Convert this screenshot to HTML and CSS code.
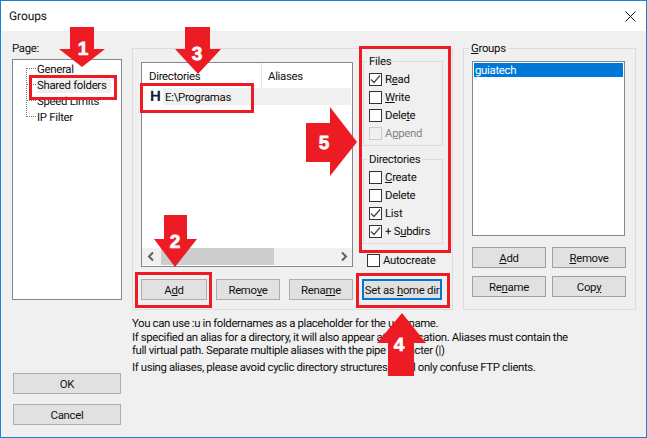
FILE: index.html
```html
<!DOCTYPE html>
<html lang="en">
<head>
<meta charset="utf-8">
<title>Groups</title>
<link rel="stylesheet" href="styles.css">
</head>
<body>
<div class="window">
  <header class="titlebar">
    <span class="title">Groups</span>
    <svg class="close" width="11" height="11" viewBox="0 0 11 11"><path d="M0.5 0.5L10.5 10.5M10.5 0.5L0.5 10.5" stroke="#111" fill="none"/></svg>
  </header>
  <main class="content">
    <aside class="pages">
      <label class="page-label">Page:</label>
      <div class="tree">
        <div class="tree-lines"></div>
        <div class="tree-item">General</div>
        <div class="tree-item selected">Shared folders</div>
        <div class="tree-item">Speed Limits</div>
        <div class="tree-item">IP Filter</div>
      </div>
      <div class="actions">
        <button class="btn wide">OK</button>
        <button class="btn wide">Cancel</button>
      </div>
    </aside>
    <section class="center">
      <div class="panel">
        <div class="panel-top">
          <div class="dirs">
            <div class="list-head"><span class="col-dir">Directories</span><span class="col-alias">Aliases</span></div>
            <div class="dir-row"><b class="home">H</b><span class="dir-name">E:\Programas</span></div>
            <div class="hscroll">
              <svg width="19" height="17" viewBox="0 0 19 17"><path d="M11 4.5L7 8.5L11 12.5" stroke="#606060" stroke-width="2" fill="none"/></svg>
              <div class="track"><div class="thumb"></div></div>
              <svg width="17" height="17" viewBox="0 0 17 17"><path d="M7 4.5L11 8.5L7 12.5" stroke="#606060" stroke-width="2" fill="none"/></svg>
            </div>
          </div>
          <div class="perms">
            <fieldset class="gbox files">
              <legend>Files</legend>
              <label class="check"><i class="box"><svg width="11" height="11" viewBox="0 0 11 11"><path d="M1 5.5L4 8.5L10 1.5" stroke="#444" fill="none" stroke-width="1.2"/></svg></i><span>R<u>e</u>ad</span></label>
              <label class="check"><i class="box"></i><span><u>W</u>rite</span></label>
              <label class="check"><i class="box"></i><span>Dele<u>t</u>e</span></label>
              <label class="check dis"><i class="box"></i><span>A<u>p</u>pend</span></label>
            </fieldset>
            <fieldset class="gbox dirsbox">
              <legend>Directories</legend>
              <label class="check"><i class="box"></i><span><u>C</u>reate</span></label>
              <label class="check"><i class="box"></i><span>Delete</span></label>
              <label class="check"><i class="box"><svg width="11" height="11" viewBox="0 0 11 11"><path d="M1 5.5L4 8.5L10 1.5" stroke="#444" fill="none" stroke-width="1.2"/></svg></i><span>List</span></label>
              <label class="check"><i class="box"><svg width="11" height="11" viewBox="0 0 11 11"><path d="M1 5.5L4 8.5L10 1.5" stroke="#444" fill="none" stroke-width="1.2"/></svg></i><span>+ S<u>u</u>bdirs</span></label>
            </fieldset>
            <label class="check auto"><i class="box"></i><span>Autocreate</span></label>
          </div>
        </div>
        <div class="btn-row">
          <button class="btn b-add">A<u>d</u>d</button>
          <button class="btn b-rem">Remo<u>v</u>e</button>
          <button class="btn b-ren">Rena<u>m</u>e</button>
          <button class="btn b-home">Set as <u>h</u>ome dir</button>
        </div>
      </div>
      <div class="notes">
        <p>You can use :u in foldernames as a placeholder for the username.</p>
        <p>If specified an alias for a directory, it will also appear at that location. Aliases must contain the<br>full virtual path. Separate multiple aliases with the pipe character (|)</p>
        <p>If using aliases, please avoid cyclic directory structures, it will only confuse FTP clients.</p>
      </div>
    </section>
    <fieldset class="gbox groups">
      <legend><u>G</u>roups</legend>
      <div class="group-list"><div class="group-sel">guiatech</div></div>
      <div class="group-btns">
        <button class="btn raised"><u>A</u>dd</button>
        <button class="btn raised"><u>R</u>emove</button>
        <button class="btn raised">Re<u>n</u>ame</button>
        <button class="btn raised">Cop<u>y</u></button>
      </div>
    </fieldset>
  </main>
  <svg class="marks" width="647" height="438" viewBox="0 0 647 438">
    <g class="rects">
      <rect x="30.5" y="76.5" width="85" height="22"/>
      <rect x="141.5" y="84.5" width="111" height="27"/>
      <rect x="360.5" y="47.5" width="89" height="204"/>
      <rect x="136.5" y="273.5" width="74" height="33"/>
      <rect x="357.5" y="274.5" width="91" height="32"/>
    </g>
    <g class="arrows">
      <path d="M70 27H94V49H105L82 67L59 49H70Z"/>
      <path d="M185 27H210V49H221L198 74L175 49H185Z"/>
      <path d="M306 123H330V107L357 142L330 176V162H306Z"/>
      <path d="M164 215H187V239H197L175 267L154 239H164Z"/>
      <path d="M388 376H414V343H426L402 313L377 343H388Z"/>
    </g>
    <g class="nums">
      <text x="83" y="55">1</text>
      <text x="197" y="60">3</text>
      <text x="324" y="149">5</text>
      <text x="175" y="248">2</text>
      <text x="399" y="351">4</text>
    </g>
  </svg>
</div>
</body>
</html>
```
FILE: styles.css
```css
* { box-sizing: border-box; }
html, body { margin: 0; padding: 0; }
body { width: 647px; height: 438px; overflow: hidden; font: 11.4px/16px Roboto, "Liberation Sans", sans-serif; letter-spacing: -.3px; text-rendering: geometricPrecision; color: #111; }
u { text-decoration: underline; text-underline-offset: 1px; }
.window { position: relative; width: 647px; height: 438px; border: 1px solid #1a82d4; background: #f0f0f0; display: flex; flex-direction: column; }
.titlebar { height: 30px; flex: none; background: #fff; display: flex; align-items: center; justify-content: space-between; padding: 0 10px 0 8px; }
.title { font-size: 12px; letter-spacing: -.1px; }
.content { flex: 1; display: flex; padding: 0 0 0 11px; }
.pages { width: 110px; flex: none; display: flex; flex-direction: column; }
.page-label { margin-top: 9px; height: 19px; line-height: 17px; }
.tree { position: relative; width: 110px; height: 241px; background: #fff; border: 1px solid #82878c; padding: 1px 0 0 24px; }
.tree-item { height: 16px; line-height: 16px; white-space: nowrap; position: relative; }
.tree-item.selected { background: #f0f0f0; margin-right: 10px; }
.tree-lines { position: absolute; left: 13px; top: 8px; width: 10px; height: 49px; border-left: 1px dotted #777; }
.tree-lines::before { content: ""; position: absolute; left: 0; top: 0; width: 10px; height: 49px; background: repeating-linear-gradient(to bottom, #777 0 1px, transparent 1px 16px); -webkit-mask: repeating-linear-gradient(to right, #000 0 1px, transparent 1px 2px); mask: repeating-linear-gradient(to right, #000 0 1px, transparent 1px 2px); }
.actions { margin-top: 73px; display: flex; flex-direction: column; gap: 10px; padding-left: 1px; }
.btn { font: inherit; letter-spacing: inherit; color: #111; background: #e1e1e1; border: 1px solid #adadad; height: 21px; padding: 0; white-space: nowrap; }
.btn.wide { width: 108px; }
.center { margin-left: 10px; width: 321px; flex: none; display: flex; flex-direction: column; }
.panel { margin-top: 17px; height: 262px; border: 1px solid #dcdcdc; padding: 13px 0 0 8px; }
.panel-top { display: flex; height: 217px; }
.dirs { width: 212px; height: 205px; flex: none; background: #fff; border: 1px solid #82878c; display: flex; flex-direction: column; }
.list-head { height: 25px; display: flex; align-items: center; flex: none; }
.col-dir { width: 120px; padding-left: 7px; height: 100%; line-height: 26px; border-right: 1px solid #e5e5e5; }
.col-alias { padding-left: 6px; line-height: 26px; height: 100%; }
.dir-row { height: 17px; margin-right: 1px; background: linear-gradient(to right, #fff 21px, #f0f0f0 21px); display: flex; align-items: center; padding-left: 8px; flex: none; }
.home { font: bold 15px/17px "Liberation Sans", sans-serif; letter-spacing: 0; color: #0f2238; width: 15px; }
.hscroll { margin-top: auto; height: 17px; display: flex; margin-bottom: 1px; background: #f0f0f0; align-items: center; flex: none; }
.track { flex: 1; height: 17px; }
.thumb { width: 113px; height: 17px; background: #cdcdcd; }
.perms { margin-left: 10px; margin-top: -8px; width: 80px; flex: none; position: relative; }
.gbox { margin: 0; border: 1px solid #dcdcdc; padding: 0; min-width: 0; }
.gbox legend { padding: 0 2px; line-height: 15px; }
.files { height: 92px; padding: 1px 0 0 5px; }
.files legend, .dirsbox legend { margin-left: -2px; }
.dirsbox { margin-top: 6px; height: 92px; padding: 1px 0 0 5px; }
.check { display: flex; align-items: center; height: 18px; gap: 3px; white-space: nowrap; }
.box { width: 13px; height: 13px; flex: none; background: #fff; border: 1px solid #333; display: block; }
.box svg { display: block; }
.check.dis .box { border-color: #ccc; background: #f0f0f0; }
.check.dis span { color: #888; }
.auto { margin-top: 7px; margin-left: 4px; }
.btn-row { display: flex; }
.b-add { width: 66px; }
.b-rem { width: 64px; margin-left: 9px; }
.b-ren { width: 64px; margin-left: 9px; }
.b-home { width: 80px; margin-left: 9px; border: 2px solid #0078d7; }
.notes { padding-top: 7px; width: 460px; white-space: nowrap; letter-spacing: -.38px; }
.notes p { margin: 0; line-height: 13.5px; }
.notes p + p + p { margin-top: 3.5px; }
.groups { margin-left: 10px; margin-top: 10px; width: 173px; height: 269px; }
.groups legend { margin-left: 5px; }
.group-list { width: 153px; height: 175px; background: #fff; border: 1px solid #82878c; margin: 5px 0 0 8px; padding: 1px; }
.group-sel { background: #0078d7; color: #fff; height: 14px; line-height: 14px; padding-left: 1px; }
.group-btns { display: grid; grid-template-columns: 74px 74px; column-gap: 6px; row-gap: 8px; margin: 11px 0 0 8px; }
.raised { height: 21px; border: 0; box-shadow: inset 0 0 0 1px #a0a0a0; background:
  linear-gradient(#111, #111) right bottom / 20px 1px no-repeat,
  linear-gradient(#111, #111) right bottom / 1px 10px no-repeat,
  linear-gradient(#111, #111) left top / 1px 10px no-repeat,
  #e1e1e1; }
.marks { position: absolute; left: -1px; top: -1px; pointer-events: none; }
.rects rect { fill: none; stroke: #ed1c24; stroke-width: 3; }
.arrows path { fill: #ed1c24; }
.nums text { fill: #fff; font: bold 19px "Liberation Sans", sans-serif; letter-spacing: 0; text-anchor: middle; stroke: #fff; stroke-width: .7; }
```
